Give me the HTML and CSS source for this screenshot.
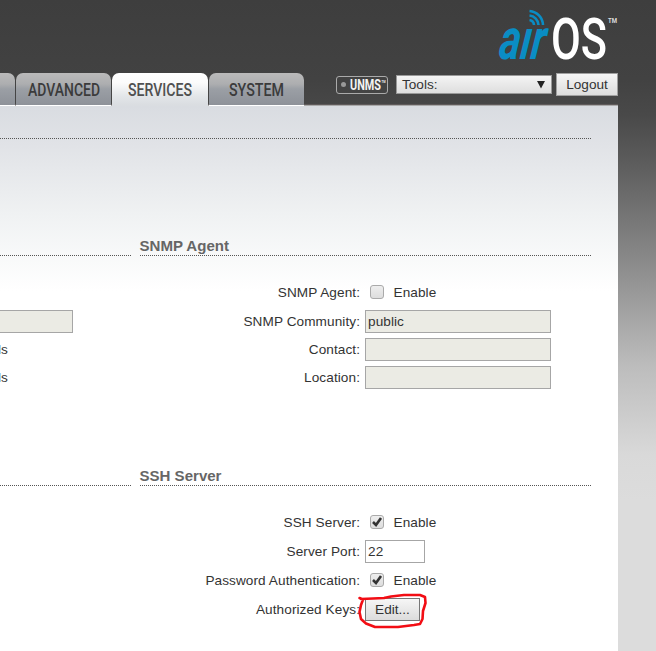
FILE: index.html
```html
<!DOCTYPE html>
<html lang="en">
<head>
<meta charset="utf-8">
<title>airOS - Services</title>
<link rel="stylesheet" href="styles.css">
</head>
<body>
<div class="page">
  <header class="header">
    <svg class="logo" width="124" height="56" viewBox="0 0 124 56" role="img" aria-label="airOS">
      <g class="logo-air" transform="translate(0 51) skewX(-7)">
        <text x="0" y="0" textLength="46" lengthAdjust="spacingAndGlyphs">aır</text>
      </g>
      <g class="waves">
        <path d="M31.500 12a5.500 5.500 0 0 1 4.500 5"/>
        <path d="M31.500 7.500a10 10 0 0 1 9 9.500"/>
        <path d="M31.500 3a14.500 14.500 0 0 1 13.500 14"/>
      </g>
      <text class="logo-os" x="53" y="51" textLength="56" lengthAdjust="spacingAndGlyphs">OS</text>
      <text class="logo-tm" x="110" y="15" textLength="9" lengthAdjust="spacingAndGlyphs">TM</text>
    </svg>
    <div class="bar">
      <nav class="tabs">
        <a class="tab tab-cut"></a>
        <a class="tab"><svg width="76" height="22"><text x="1" y="17" textLength="72" lengthAdjust="spacingAndGlyphs">ADVANCED</text></svg></a>
        <a class="tab active"><svg width="76" height="22"><text x="5" y="17" textLength="64" lengthAdjust="spacingAndGlyphs">SERVICES</text></svg></a>
        <a class="tab"><svg width="76" height="22"><text x="9" y="17" textLength="55" lengthAdjust="spacingAndGlyphs">SYSTEM</text></svg></a>
      </nav>
      <div class="tools">
        <span class="unms"><i class="dot"></i><svg width="37" height="16"><text x="0" y="13" textLength="31" lengthAdjust="spacingAndGlyphs">UNMS</text><text class="mark" x="31.500" y="6" textLength="4" lengthAdjust="spacingAndGlyphs">TM</text></svg></span>
        <span class="select">Tools:<svg width="8" height="8"><path d="M0 0h8L4 7.500z"/></svg></span>
        <button class="btn logout">Logout</button>
      </div>
    </div>
  </header>
  <main class="content">
    <div class="rule"></div>
    <div class="columns">
      <div class="left">
        <h2 class="title"></h2>
        <div class="rows">
          <div class="row"></div>
          <div class="row"><span class="field cut"></span></div>
          <div class="row"><span class="tail">ls</span></div>
          <div class="row"><span class="tail">ls</span></div>
        </div>
        <h2 class="title"></h2>
      </div>
      <div class="right">
        <h2 class="title">SNMP Agent</h2>
        <div class="rows">
          <div class="row"><label>SNMP Agent:</label><span class="check"></span>Enable</div>
          <div class="row"><label>SNMP Community:</label><span class="field">public</span></div>
          <div class="row"><label>Contact:</label><span class="field"></span></div>
          <div class="row"><label>Location:</label><span class="field"></span></div>
        </div>
        <h2 class="title">SSH Server</h2>
        <div class="rows ssh">
          <div class="row"><label>SSH Server:</label><span class="check"><svg width="12" height="12"><path d="M2 6l3 3 5-7"/></svg></span>Enable</div>
          <div class="row"><label>Server Port:</label><span class="field port">22</span></div>
          <div class="row"><label>Password Authentication:</label><span class="check"><svg width="12" height="12"><path d="M2 6l3 3 5-7"/></svg></span>Enable</div>
          <div class="row"><label>Authorized Keys:</label><span class="edit"><button class="btn">Edit...</button>
            <svg class="scribble" width="72" height="40" viewBox="356 591 72 40"><path d="M361 599L373 598.500 384 598 391 596.500 404 595 420 595 425 597 425.500 603 423 611 422.500 619 420 624 414 625 398 627 375 627 366 623.500 361 619 359.500 612 361 605 363 599.500 359.500 598"/></svg></span></div>
        </div>
      </div>
    </div>
  </main>
</div>
</body>
</html>
```
FILE: styles.css
```css
* { box-sizing: border-box; }
body {
  margin: 0;
  height: 651px;
  overflow: hidden;
  font: 13.6px "Liberation Sans", Arial, sans-serif;
  color: #333;
  background: linear-gradient(#3e3e3e 0, #424242 80px, #494949 115px, #5b5b5b 160px, #8e8e8e 270px, #bcbcbc 365px, #d9d9d9 455px, #dcdcdc 500px, #dcdcdc 100%);
}
.page { width: 618px; }
.header { height: 105px; display: flex; flex-direction: column; align-items: flex-end; }
.logo { height: 56px; margin: 8px -4px 0 0; flex: none; overflow: visible; }
.logo text { font-family: "Roboto", sans-serif; }
.logo .logo-air text { font-size: 57px; font-weight: 700; font-style: italic; fill: #0a8dc4; }
.waves path { fill: none; stroke: #0a8dc4; stroke-width: 2.6; }
.logo .logo-os { font-size: 57px; font-weight: 500; fill: #fff; }
.logo .logo-tm { font-size: 7px; font-weight: 700; fill: #ddd; }
.bar { width: 618px; height: 41px; display: flex; justify-content: space-between; align-items: flex-end; border-bottom: 1px solid #5f5a5a; }
.tabs { display: flex; gap: 1px; height: 33px; margin-bottom: -2px; }
.tab {
  width: 95px;
  height: 33px;
  padding: 6px 0 0 11px;
  border-radius: 7px 7px 0 0;
  border-bottom: 1px solid #fff;
  background: linear-gradient(#bababa, #adaeb0 11px, #9b9fa5 16px, #8d9198 100%);
}
.tab-cut { width: 15px; border-top-left-radius: 0; }
.tab.active { width: 96px; background: linear-gradient(#fff, #fbfbfb 10px, #e3e6e9 23px, #dadde1 100%); border-bottom-color: #dadde1; }
.tab svg { display: block; overflow: visible; }
.tab text { font: 500 18px "Roboto", sans-serif; fill: #3b3b3b; }
.tab.active text { fill: #505050; }
.tools { display: flex; align-items: center; height: 23px; margin-bottom: 8px; }
.unms { width: 52px; height: 18px; margin-right: 8px; display: flex; align-items: center; border: 1px solid #aaa; border-radius: 3px; }
.dot { width: 5px; height: 5px; margin: 0 8px 0 4px; border-radius: 50%; background: #999; flex: none; }
.unms svg { flex: none; margin-left: -4px; overflow: visible; }
.unms text { font: 700 14px "Roboto", sans-serif; fill: #f4f4f4; }
.unms .mark { font-size: 4px; }
.select { width: 156px; height: 19px; margin-right: 4px; padding: 0 6px 0 5px; display: flex; align-items: center; justify-content: space-between; border: 1px solid #999; background: linear-gradient(#f4f4f4, #dedede); }
.select svg { fill: #222; }
.btn { height: 23px; padding: 0 0 1px; border: 1px solid #a0a0a0; border-radius: 0; font: inherit; color: #333; background: linear-gradient(#f6f6f6, #dcdcdc); }
.logout { width: 62px; }
.content { height: 546px; border-top: 1px solid #aaa; background: linear-gradient(#d9dce1 0, #e1e3e7 40px, #f0f2f3 110px, #fff 185px); }
.rule { height: 33px; width: 591px; border-bottom: 1px dotted #555; }
.columns { display: grid; grid-template-columns: 131px 452px; column-gap: 8px; padding-top: 98px; }
.right { padding-left: 1px; }
.title { height: 19px; margin: 0; border-bottom: 1px dotted #555; font-size: 15.050px; line-height: 17px; font-weight: 700; color: #666; text-indent: -0.500px; }
.rows { height: 211px; padding-top: 22px; }
.rows.ssh { height: 146px; }
.row { height: 28px; display: flex; align-items: center; letter-spacing: 0.080px; }
.row:first-child { height: 29px; }
.ssh .row { height: 29px; }
.row label { width: 220px; margin-right: 5px; text-align: right; flex: none; }
.field { width: 186px; height: 23px; padding-left: 2px; line-height: 21px; border: 1px solid #a6a6a6; background: #ebebe4; }
.field.port { width: 60px; background: #fff; }
.field.cut { width: 73px; border-left: 0; }
.tail { margin-left: -2px; }
.check { width: 14px; height: 14px; margin: -1px 9.500px 0 5px; border: 1px solid #aaa; border-radius: 3px; background: linear-gradient(#eee, #ddd); }
.check svg { display: block; }
.check path { fill: none; stroke: #333; stroke-width: 2.6; }
.edit { position: relative; height: 23px; }
.edit .btn { width: 55px; border-color: #777; display: block; }
.scribble { position: absolute; left: -9px; top: -7px; pointer-events: none; }
.scribble path { fill: none; stroke: #f20d14; stroke-width: 2.600; stroke-linejoin: round; stroke-linecap: round; }
```
